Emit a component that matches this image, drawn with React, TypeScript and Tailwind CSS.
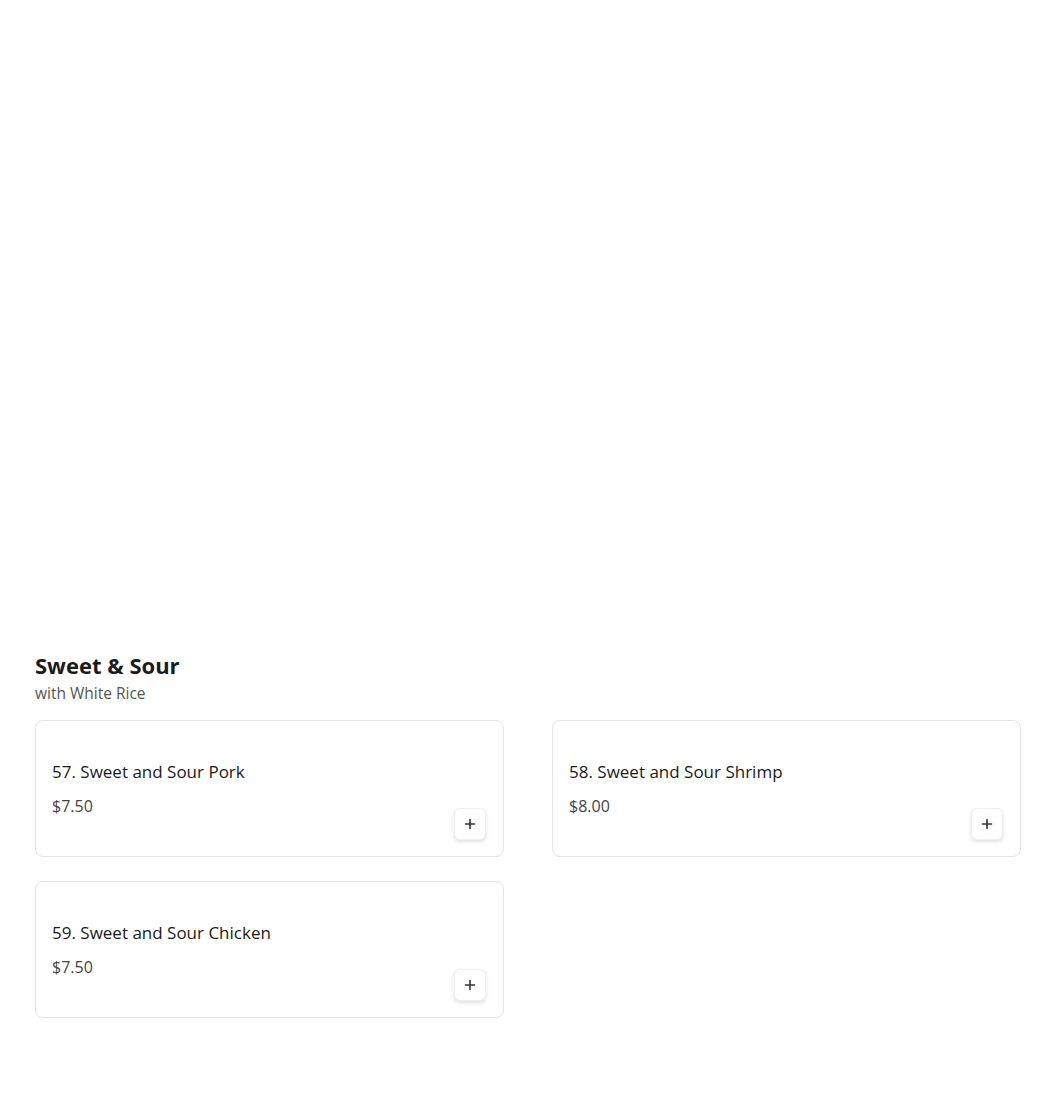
import React from 'react';

type Item = {
  id: string;
  name: string;
  price: string;
};

const items: Item[] = [
  { id: '57', name: '57. Sweet and Sour Pork', price: '$7.50' },
  { id: '58', name: '58. Sweet and Sour Shrimp', price: '$8.00' },
  { id: '59', name: '59. Sweet and Sour Chicken', price: '$7.50' },
];

const PlusIcon = () => (
  <svg width="12" height="12" viewBox="0 0 12 12" fill="none" stroke="#333" strokeWidth="1.6" strokeLinecap="round">
    <path d="M6 1.5v9M1.5 6h9" />
  </svg>
);

const ItemCard: React.FC<{ item: Item }> = ({ item }) => (
  <div className="flex flex-col h-[137px] rounded-lg border border-[#e4e4e4] bg-white pl-4 pr-[17px] pt-[41px] pb-4">
    <h3 className="text-[17px] leading-[20px] font-medium text-[#1a1a1a]">{item.name}</h3>
    <p className="mt-[14px] text-[16px] leading-[20px] text-[#444]">{item.price}</p>
    <div className="flex justify-end -mt-[8px]">
      <button className="flex items-center justify-center w-8 h-8 rounded-md border border-[#eeeeee] bg-white shadow-[0_2px_4px_rgba(0,0,0,0.12)]">
        <PlusIcon />
      </button>
    </div>
  </div>
);

export default function App() {
  return (
    <div className="min-h-[1105px] bg-white pl-[35px] pr-[29px] pt-[653px]" style={{ fontFamily: '"Open Sans", "Liberation Sans", sans-serif' }}>
      {/* Section header */}
      <h2 className="text-[22px] leading-[24px] font-bold text-[#1b1b1b]">
        Sweet &amp; Sour
      </h2>
      <p className="mt-[6px] text-[15.5px] leading-[20px] text-[#555]">with White Rice</p>

      {/* Items */}
      <div className="mt-[17px] grid grid-cols-2 gap-x-[48px] gap-y-[24px]">
        {items.map(item => (
          <ItemCard key={item.id} item={item} />
        ))}
      </div>
    </div>
  );
}
